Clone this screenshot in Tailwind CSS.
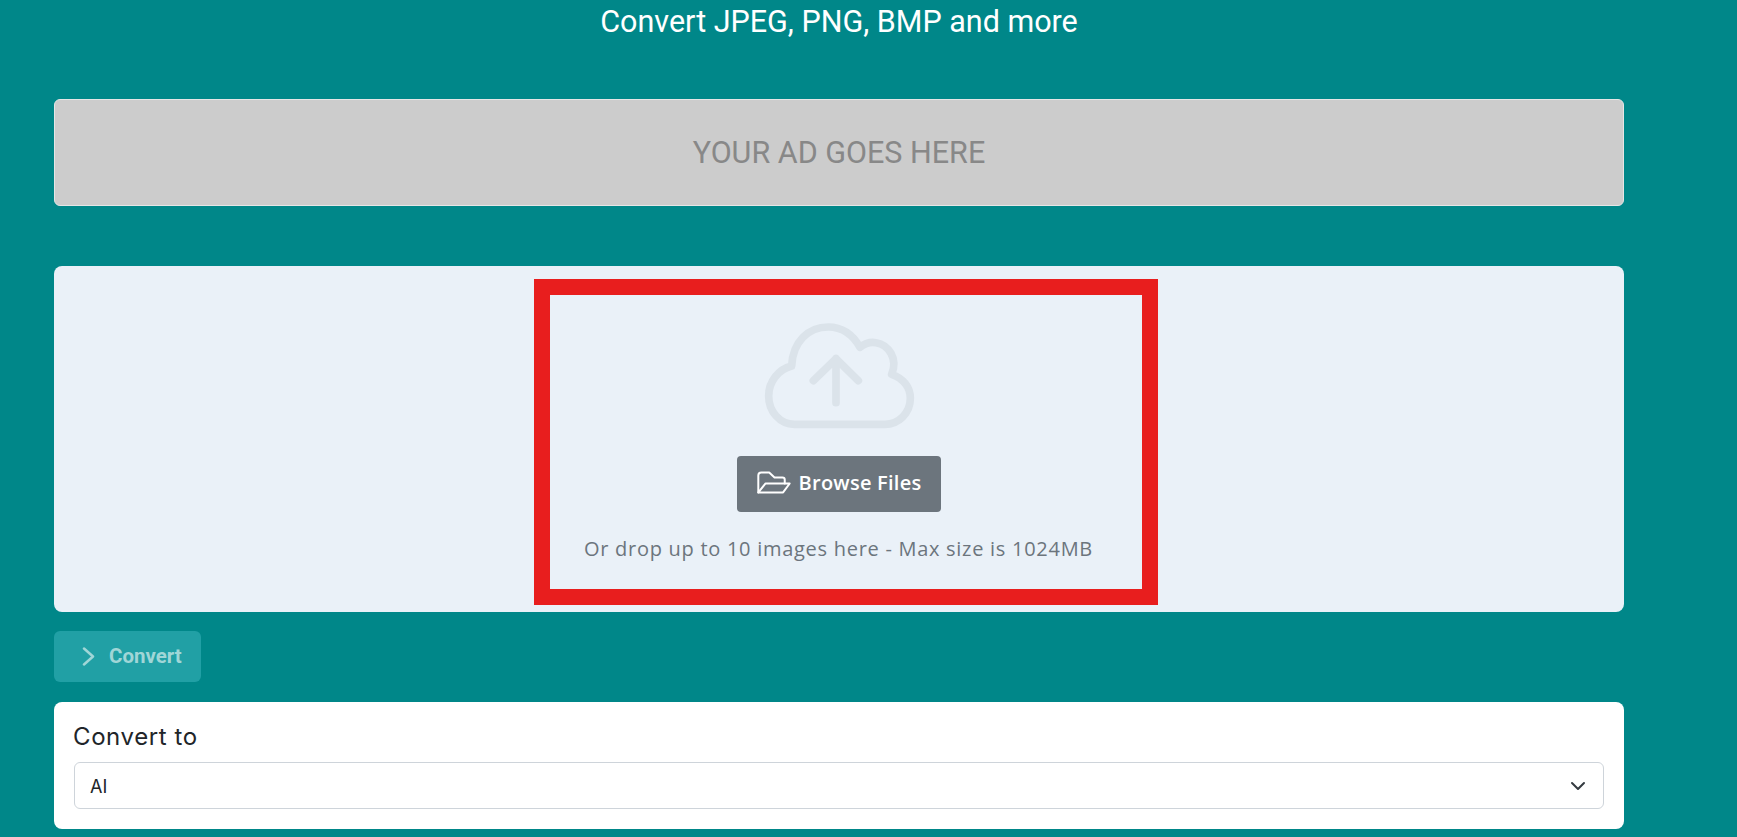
<!DOCTYPE html>
<html lang="en">
<head>
    <meta charset="UTF-8">
    <meta name="viewport" content="width=device-width, initial-scale=1.0">
    <title>Image Converter</title>
    <script src="https://cdn.jsdelivr.net/npm/@tailwindcss/browser@4"></script>
</head>
<body class="bg-[#008789] h-[837px] overflow-hidden font-['Roboto',sans-serif]">

    <main class="w-[1570px] ml-[54px]">
        <h2 class="text-[30.5px] leading-[44px] text-white text-center">Convert JPEG, PNG, BMP and more</h2>

        <!-- ad slot -->
        <div class="mt-[55px] h-[107px] flex items-center justify-center bg-[#cccccc] border border-[#e6e6e6] rounded-md text-[30.5px] text-[#888888]">
            YOUR AD GOES HERE
        </div>

        <!-- upload area -->
        <section class="mt-[60px] h-[346px] pt-[13px] bg-[#eaf1f8] rounded-lg">
            <div class="w-[624px] h-[326px] ml-[480px] border-[16px] border-[#e81e1e] flex flex-col items-center pt-[15px] pr-[16px] font-['Open_Sans',sans-serif]">
                <svg class="w-[180px] h-[130px] ml-[4px] shrink-0" viewBox="0 0 540 390" fill="none" stroke="#dbe3ea" stroke-width="23" stroke-linecap="round" stroke-linejoin="round">
                    <path d="M125 168C128 95 175 51 235 51C277 51 309 75 330 112C345 100 362 95 378 98C415 104 445 145 425 193C460 205 481 232 481 265C481 310 445 343 405 343H133C90 343 56 305 56 258C56 215 85 178 125 168Z"/>
                    <path d="M258 278V146M190 212L258 146L325 212"/>
                </svg>
                <button class="mt-[16px] ml-[2px] w-[204px] h-[56px] pb-[3px] pr-[2px] shrink-0 flex items-center justify-center gap-[6px] bg-[#6c757d] rounded text-white text-[20px] font-semibold tracking-[0.25px]">
                    <svg class="w-[38px] h-[27px]" viewBox="75 85 115 80" fill="none" stroke="#ffffff" stroke-width="6" stroke-linejoin="round" stroke-linecap="round">
                        <path d="M85 155V104Q85 95 94 95H118L134 110H158Q165 110 165 117V128"/>
                        <path d="M85 155L107 128H180L160 155Z"/>
                    </svg>
                    Browse Files
                </button>
                <p class="mt-[22px] ml-[1px] text-[20px] font-medium tracking-[0.72px] text-[#6c757d]">Or drop up to 10 images here - Max size is 1024MB</p>
            </div>
        </section>

        <button class="mt-[19px] w-[147px] h-[51px] flex items-center gap-[14px] pl-[28px] bg-[#21a0a5] rounded-md text-[20.5px] font-bold text-[#a0d6d7]">
            <svg class="w-[13px] h-[19px]" viewBox="0 0 13 19" fill="none" stroke="#a0d6d7" stroke-width="2.5" stroke-linecap="round" stroke-linejoin="round">
                <path d="M2 1.5L11 9.5L2 17.5"/>
            </svg>
            Convert
        </button>

        <section class="mt-[20px] h-[127px] px-[20px] pt-[19px] bg-white rounded-lg">
            <label class="block -ml-[1px] text-[24px] leading-[32px] tracking-[0.6px] text-[#212529] font-['Inter',sans-serif]">Convert to</label>
            <div class="relative mt-[9px]">
                <select class="block w-full h-[47px] pl-[15px] pt-[2px] appearance-none bg-white border border-[#ced4da] rounded-md text-[18px] text-[#212529] font-['Inter',sans-serif]">
                    <option>AI</option>
                </select>
                <svg class="absolute right-[18px] top-[19px] w-[16px] h-[10px] pointer-events-none" viewBox="0 0 16 10" fill="none" stroke="#343a40" stroke-width="2" stroke-linecap="round" stroke-linejoin="round">
                    <path d="M2 2L8 8L14 2"/>
                </svg>
            </div>
        </section>
    </main>

</body>
</html>
